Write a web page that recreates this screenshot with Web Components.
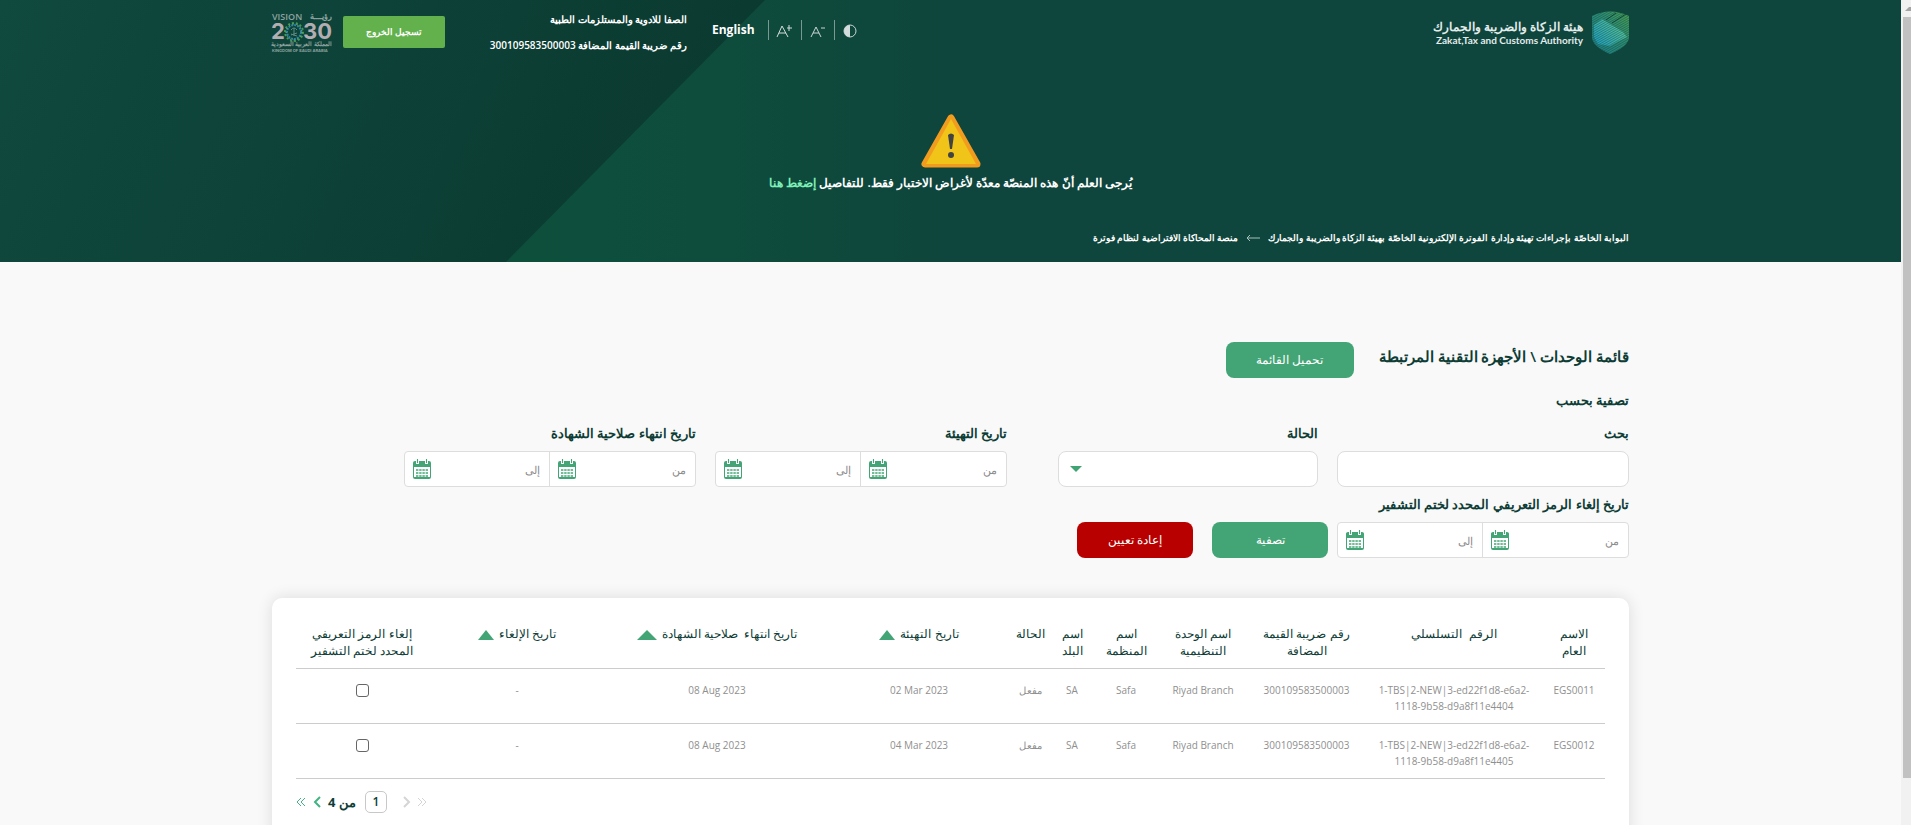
<!DOCTYPE html>
<html lang="ar" dir="rtl">
<head>
<meta charset="utf-8">
<meta name="viewport" content="width=device-width, initial-scale=1">
<title>قائمة الوحدات \ الأجهزة التقنية المرتبطة</title>
<style>
  html, body { margin: 0; height: 100%; overflow: hidden; }
  body { background: #f9f9f9; color: #0e3d36; font: 12px/16px "Open Sans", "Noto Sans"; }
</style>
</head>
<body>
<fatoora-shell>
  <fatoora-header></fatoora-header>
  <fatoora-filters></fatoora-filters>
  <fatoora-devices></fatoora-devices>
</fatoora-shell>

<script>
const define = (name, html, setup) => {
  const template = document.createElement('template');
  template.innerHTML = `<style>*,*::before,*::after{box-sizing:border-box}button,input,select{font:inherit;color:inherit;margin:0}</style>` + html;
  customElements.define(name, class extends HTMLElement {
    constructor() {
      super();
      this.attachShadow({ mode: 'open' }).append(template.content.cloneNode(true));
    }
    connectedCallback() { if (setup) setup(this, this.shadowRoot); }
  });
};

define('fatoora-shell', `
<style>
  :host { display: grid; grid-template-columns: minmax(0, 1fr) 10px; height: 100vh; direction: ltr; }
  main { direction: rtl; overflow: hidden; display: flex; flex-direction: column; }
  .track { background: #f1f1f1; padding-top: 7px; display: flex; flex-direction: column; align-items: flex-end; overflow: hidden; }
  .track svg { flex: none; width: 6px; height: 4px; margin-bottom: 6px; }
  .thumb { width: 8px; height: 93%; background: #c1c1c1; }
</style>
<main><slot></slot></main>
<div class="track" aria-hidden="true">
  <svg viewBox="0 0 6 4"><path d="M0 4 4 0h2v4z" fill="#a3a3a3"/></svg>
  <div class="thumb"></div>
</div>`);

define('vision-logo', `
<style>
  :host { display: block; width: 60px; height: 42px; direction: ltr; }
  svg { display: block; width: 100%; height: 100%; overflow: visible; }
  text { fill: #8fa3a0; }
  .year { fill: #b3adb3; font: 700 22px Inter, sans-serif; }
</style>
<svg viewBox="0 0 60 42" role="img" aria-label="Vision 2030">
  <text x="0" y="9" font-size="9" font-family="Open Sans">VISION</text>
  <text x="60" y="8" font-size="8" direction="rtl">رؤيــــة</text>
  <text class="year" x="-1" y="28">2</text>
  <text class="year" x="31" y="28">30</text>
  <g fill="none" stroke-width="2">
    <circle cx="22" cy="21" r="9" stroke="#3f9b57" stroke-dasharray="2 2"/>
    <circle cx="22" cy="21" r="7" stroke="#2e86a8" stroke-dasharray="2 1"/>
    <circle cx="22" cy="21" r="8" stroke="#a8b04a" stroke-width="1" stroke-dasharray="1 3"/>
  </g>
  <path d="M22 17v8M19 19q3-4 6 0M19 24l6-2M25 25l-6-2" fill="none" stroke="#5d8a84"/>
  <text x="60" y="35" font-size="6" direction="rtl">المملكة العربية السعودية</text>
  <text x="0" y="41" font-size="4" font-weight="700" font-family="Inter">KINGDOM OF SAUDI ARABIA</text>
</svg>`);

define('zatca-logo', `
<style>
  :host { display: flex; align-items: center; gap: 9px; color: #e3eceb; text-align: right; }
  svg { display: block; width: 37px; height: 43px; }
  .ar { display: block; font-size: 12px; line-height: 15px; font-weight: 600; }
  .en { display: block; font-family: Lato, sans-serif; font-size: 10px; line-height: 12px; font-weight: 700; direction: ltr; }
</style>
<svg viewBox="0 0 37 43" aria-hidden="true">
  <defs>
    <linearGradient id="g" x1="1" y1="0" x2="0" y2="1"><stop offset="0" stop-color="#4da24f"/><stop offset=".4" stop-color="#2f8f75"/><stop offset="1" stop-color="#1b7f8a"/></linearGradient>
    <linearGradient id="b" x1="0" y1="1" x2="1" y2=".3"><stop offset="0" stop-color="#1d9fc4"/><stop offset="1" stop-color="#5fc79a"/></linearGradient>
    <pattern id="p" width="2" height="2" patternUnits="userSpaceOnUse" patternTransform="rotate(-30)"><path d="M0 0h2" stroke="#0e453c" stroke-width="1.4"/></pattern>
  </defs>
  <path d="M0 5Q18-4 37 5v21q0 9-19 17Q0 35 0 26z" fill="url(#g)"/>
  <path d="M2 14 10 8 31 21 35 26Q26 30 18 35L6 33 2 26z" fill="url(#b)"/>
  <path d="M0 5Q18-4 37 5v21q0 9-19 17Q0 35 0 26z" fill="url(#p)" opacity=".6"/>
  <path d="M14 9 24 2M20 12 34 3" stroke="#0e453c"/>
</svg>
<span><span class="ar">هيئة الزكاة والضريبة والجمارك</span><span class="en">Zakat,Tax and Customs Authority</span></span>`);

define('fatoora-header', `
<style>
  :host { display: block; flex: none; position: relative; color: #fff; font-weight: 600;
    background: linear-gradient(90deg, #0e4f3c 506px, #0e4d3c 700px, #0e453c 950px); }
  .shade { position: absolute; inset: 0;
    background: linear-gradient(115deg, #10493e 0, #0d4238 350px, #0b3a30 680px);
    clip-path: polygon(0 0, 765px 0, 506px 100%, 0 100%); }
  .wrap { position: relative; max-width: 1357px; margin: 0 auto; }
  .top { display: flex; justify-content: space-between; align-items: flex-start; padding-top: 11px; }
  .tools { display: flex; align-items: flex-start; }
  .access { display: flex; align-items: center; height: 20px; margin-top: 9px; }
  .access button { display: flex; align-items: center; justify-content: center; width: 33px; height: 20px; padding: 0; border: 0; border-left: 1px solid #7a9994; background: none; }
  .access svg { display: block; width: 17px; height: 17px; }
  .access a { margin-inline-start: 13px; font-size: 12px; font-weight: 700; }
  a { color: inherit; text-decoration: none; }
  .who { margin: -5px 25px 0 0; font-size: 10px; line-height: 26px; width: 200px; white-space: nowrap; }
  .who p { margin: 0; }
  .logout { width: 102px; height: 32px; margin: 5px 42px 0 11px; padding: 0; border: 0; border-radius: 2px; background: #63b14d; color: #fff; font-size: 9px; font-weight: 700; }
  .alert { display: flex; flex-direction: column; align-items: center; padding-top: 56px; }
  .alert svg { display: block; width: 60px; height: 54px; }
  .alert p { margin: 7px 0 0; line-height: 16px; font-size: 12px; }
  .alert a { color: #80f0b8; }
  .crumbs { display: flex; align-items: center; gap: 8px; padding: 39px 0 16px; font-size: 9px; line-height: 16px; }
  .crumbs svg { width: 14px; height: 8px; }
</style>
<div class="shade"></div>
<div class="wrap">
  <div class="top">
    <zatca-logo></zatca-logo>
    <div class="tools">
      <div class="access">
        <button aria-label="التباين"><svg viewBox="0 0 17 17"><circle cx="8" cy="9" r="6" fill="none" stroke="#c9d6d4"/><path d="M8 3a6 6 0 0 0 0 12z" fill="#d3dedc"/></svg></button>
        <button aria-label="تصغير الخط"><svg viewBox="0 0 17 17" fill="none" stroke="#c9d6d4"><path d="M2 15 7 5l5 10M4 11h6M12 6h4"/></svg></button>
        <button aria-label="تكبير الخط"><svg viewBox="0 0 17 17" fill="none" stroke="#d3dedc"><path d="M1 15 6 4l6 11M3 11h7M11 6h5M13 3v6"/></svg></button>
        <a href="#" lang="en">English</a>
      </div>
      <div class="who"><p>الصفا للادوية والمستلزمات الطبية</p><p>رقم ضريبة القيمة المضافة 300109583500003</p></div>
      <button class="logout">تسجيل الخروج</button>
      <vision-logo></vision-logo>
    </div>
  </div>
  <div class="alert">
    <svg viewBox="0 0 60 54" aria-hidden="true"><path d="M30 4 4 50h52z" fill="#f0c419" stroke="#f29c1f" stroke-width="7" stroke-linejoin="round"/><path d="M30 5 5 50h50z" fill="#f0c419"/><path d="M27 21q3-3 6 0l-2 14h-2z" fill="#414342"/><circle cx="30" cy="41" r="3" fill="#414342"/></svg>
    <p>يُرجى العلم أنّ هذه المنصّة معدّة لأغراض الاختبار فقط. للتفاصيل <a href="#">إضغط هنا</a></p>
  </div>
  <nav class="crumbs">
    <a href="#">البوابة الخاصّة بإجراءات تهيئة وإدارة الفوترة الإلكترونية الخاصّة بهيئة الزكاة والضريبة والجمارك</a>
    <svg viewBox="0 0 14 8" fill="none" stroke="#a9c0bb" aria-hidden="true"><path d="M14 4H1M4 1 1 4l3 3"/></svg>
    <span>منصة المحاكاة الافتراضية لنظام فوترة</span>
  </nav>
</div>`);

const label = `label { display: block; font-size: 13px; line-height: 18px; font-weight: 600; white-space: nowrap; }`;
const control = `height: 36px; border: 1px solid #ddd; background: #fff; outline: 0;`;

define('search-field', `
<style>
  :host { display: block; } ${label}
  input { display: block; width: 100%; margin-top: 9px; padding: 0 10px; border-radius: 8px; ${control} }
</style>
<label for="q">بحث</label><input id="q" type="text">`);

define('status-field', `
<style>
  :host { display: block; } ${label}
  .box { display: block; position: relative; width: 89%; margin-top: 9px; }
  select { display: block; width: 100%; padding: 0 10px; border-radius: 8px; appearance: none; ${control} }
  svg { position: absolute; left: 12px; top: 15px; width: 12px; height: 6px; pointer-events: none; }
</style>
<label for="s">الحالة</label>
<span class="box"><select id="s"><option></option><option>مفعل</option></select>
<svg viewBox="0 0 12 6" aria-hidden="true"><path d="M0 0h12L6 6z" fill="#3fa373"/></svg></span>`);

const calendar = `<svg viewBox="0 0 18 20" aria-hidden="true"><path d="M0 4q0-2 2-2h14q2 0 2 2v14q0 2-2 2H2q-2 0-2-2z" fill="#43a576"/><path d="M1 8h16v10H1z" fill="#fff"/><path d="M3 11h12M3 14h12M3 17h12" stroke="#43a576" stroke-width="1.5" stroke-dasharray="2.4 .8"/><path d="M4.500 0v5M13.500 0v5" stroke="#f9f9f9" stroke-width="3"/><path d="M4.500 0v4M13.500 0v4" stroke="#43a576"/></svg>`;

define('date-range', `
<style>
  :host { display: block; } ${label}
  .box { display: grid; grid-template-columns: 1fr 1fr; margin-top: 9px; border-radius: 4px; ${control} }
  .half { display: flex; align-items: center; min-width: 0; padding: 0 9px 0 8px; }
  .half + .half { border-right: 1px solid #ddd; }
  input { flex: 1; min-width: 0; height: 32px; padding: 0; border: 0; outline: 0; background: none; font-size: 11px; }
  input::placeholder { color: #8c8c8c; opacity: 1; }
  svg { width: 18px; height: 20px; flex: none; }
</style>
<label for="from"><slot></slot></label>
<div class="box">
  <div class="half"><input id="from" type="text" placeholder="من">${calendar}</div>
  <div class="half"><input aria-label="إلى" type="text" placeholder="إلى">${calendar}</div>
</div>`);

define('action-button', `
<style>
  :host { display: block; width: 116px; }
  :host([wide]) { width: 128px; }
  button { width: 100%; height: 36px; padding: 0; border: 0; border-radius: 8px; background: #43a576; color: #fff; font-size: 12px; }
  :host([danger]) button { background: #b80000; }
</style>
<button type="button"><slot></slot></button>`);

define('fatoora-filters', `
<style>
  :host { display: block; flex: none; width: 100%; max-width: 1357px; margin: 0 auto; padding: 80px 0 40px; }
  header { display: flex; align-items: flex-start; gap: 25px; }
  h1 { margin: 3px 0 0; font-size: 15px; line-height: 22px; font-weight: 600; }
  h2 { margin: 13px 0 15px; font-size: 13px; line-height: 18px; font-weight: 600; }
  form { display: grid; grid-template-columns: repeat(4, minmax(0, 292px)); gap: 8px 19px; }
  .actions { grid-column: span 3; display: flex; align-items: flex-end; gap: 19px; margin-right: -10px; }
</style>
<header><h1>قائمة الوحدات \\ الأجهزة التقنية المرتبطة</h1><action-button wide>تحميل القائمة</action-button></header>
<h2>تصفية بحسب</h2>
<form>
  <search-field></search-field>
  <status-field></status-field>
  <date-range>تاريخ التهيئة</date-range>
  <date-range>تاريخ انتهاء صلاحية الشهادة</date-range>
  <date-range>تاريخ إلغاء الرمز التعريفي المحدد لختم التشفير</date-range>
  <div class="actions"><action-button>تصفية</action-button><action-button danger>إعادة تعيين</action-button></div>
</form>`);

define('page-nav', `
<style>
  :host { display: flex; direction: ltr; align-items: center; height: 22px; margin-top: 12px; font-size: 13px; font-weight: 700; }
  button { display: flex; align-items: center; height: 22px; padding: 0; border: 0; background: none; }
  svg { display: block; width: 10px; height: 12px; fill: none; }
  input { width: 22px; height: 22px; margin: 0 14px 0 9px; padding: 0; border: 1px solid #c8c8c8; border-radius: 5px; background: #fff; text-align: center; font-size: 12px; font-weight: 600; }
  .green { stroke: #43b383; } .grey { stroke: #d5d5d5; }
  .next { margin: 0 6px; } .prev { margin: 0 6px 0 0; }
</style>
<button aria-label="الأخيرة"><svg class="green" viewBox="0 0 10 12"><path d="M5 2 1 6l4 4M9 2 5 6l4 4"/></svg></button>
<button class="next" aria-label="التالي"><svg class="green" viewBox="0 0 10 12" stroke-width="2"><path d="M8 1 3 6l5 5"/></svg></button>
<label for="n" dir="rtl">من 4</label>
<input id="n" type="text" value="1">
<button class="prev" aria-label="السابق"><svg class="grey" viewBox="0 0 10 12" stroke-width="2"><path d="m3 1 5 5-5 5"/></svg></button>
<button aria-label="الأولى"><svg class="grey" viewBox="0 0 10 12"><path d="m1 2 4 4-4 4M5 2l4 4-4 4"/></svg></button>`);

const columns = [62, 178, 117, 90, 64, 44, 40, 182, 222, 178, 132];
const sort = w => `<svg viewBox="0 0 20 10" preserveAspectRatio="none" width="${w}" height="10" aria-hidden="true"><path d="M0 10 10 0l10 10z" fill="#43a576"/></svg>`;
const heads = ['الاسم<br>العام', 'الرقم&nbsp; التسلسلي', 'رقم ضريبة القيمة<br>المضافة', 'اسم الوحدة<br>التنظيمية', 'اسم<br>المنظمة', 'اسم<br>البلد', 'الحالة',
  'تاريخ التهيئة ' + sort(16), 'تاريخ انتهاء&nbsp; صلاحية الشهادة ' + sort(20), 'تاريخ الإلغاء ' + sort(16), 'إلغاء الرمز التعريفي<br>المحدد لختم التشفير'];
const rows = [
  ['EGS0011', '1-TBS|2-NEW|3-ed22f1d8-e6a2-<br>1118-9b58-d9a8f11e4404', '300109583500003', 'Riyad Branch', 'Safa', 'SA', 'مفعل', '02 Mar 2023', '08 Aug 2023', '-'],
  ['EGS0012', '1-TBS|2-NEW|3-ed22f1d8-e6a2-<br>1118-9b58-d9a8f11e4405', '300109583500003', 'Riyad Branch', 'Safa', 'SA', 'مفعل', '04 Mar 2023', '08 Aug 2023', '-'],
];

define('fatoora-devices', `
<style>
  :host { display: block; flex: 1 0 auto; width: 100%; max-width: 1357px; margin: 0 auto; padding: 27px 24px 24px; border-radius: 10px 10px 0 0; background: #fff; box-shadow: 0 0 16px rgba(0, 0, 0, .12); box-sizing: border-box; }
  table { width: 100%; table-layout: fixed; border-collapse: collapse; text-align: center; }
  tr { border-bottom: 1px solid #ccc; }
  th { height: 43px; padding: 0; vertical-align: top; font-size: 12px; line-height: 17px; font-weight: 500; white-space: nowrap; }
  th svg { display: inline-block; vertical-align: -2px; margin-right: 2px; }
  td { height: 55px; padding: 13px 0 0; vertical-align: top; font-size: 10px; line-height: 16px; color: #8f8f8f; white-space: nowrap; }
  td span { unicode-bidi: isolate; direction: ltr; }
  input { display: block; width: 13px; height: 13px; margin: 2px auto 0; appearance: none; border: 1px solid #666; border-radius: 3px; background: #fff; }
</style>
<table>
  <colgroup>${columns.map(w => `<col style="width:${w}px">`).join('')}</colgroup>
  <thead><tr>${heads.map(h => `<th scope="col">${h}</th>`).join('')}</tr></thead>
  <tbody>${rows.map(r => `<tr>${r.map(c => `<td><span>${c}</span></td>`).join('')}<td><input type="checkbox" aria-label="${r[0]}"></td></tr>`).join('')}</tbody>
</table>
<page-nav></page-nav>`);
</script>
</body>
</html>
